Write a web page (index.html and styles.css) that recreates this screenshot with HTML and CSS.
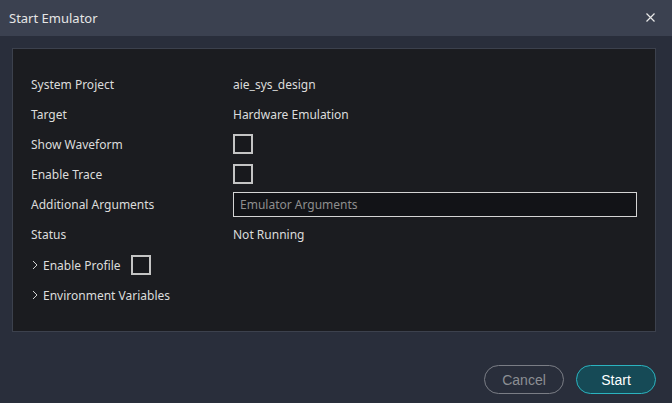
FILE: index.html
```html
<!DOCTYPE html>
<html>
<head>
<meta charset="utf-8">
<link rel="stylesheet" href="styles.css">
</head>
<body>
<div class="dialog">
  <div class="titlebar">
    <span class="title">Start Emulator</span>
    <svg class="close" width="9" height="9" viewBox="0 0 9 9"><path d="M0.5 0.5L8.5 8.5M8.5 0.5L0.5 8.5" stroke="#e8e8e8" stroke-width="1.2" fill="none"/></svg>
  </div>
  <div class="body">
    <div class="panel">
      <div class="grid">
        <div class="label">System Project</div><div class="value">aie_sys_design</div>
        <div class="label">Target</div><div class="value">Hardware Emulation</div>
        <div class="label">Show Waveform</div><div class="value"><span class="check"></span></div>
        <div class="label">Enable Trace</div><div class="value"><span class="check"></span></div>
        <div class="label">Additional Arguments</div><div class="value"><div class="input">Emulator Arguments</div></div>
        <div class="label">Status</div><div class="value">Not Running</div>
      </div>
      <div class="expanders">
        <div class="expander">
          <svg class="chev" width="6" height="10" viewBox="0 0 6 10"><path d="M1 1L5 5L1 9" stroke="#d0d0d0" stroke-width="1" fill="none"/></svg>
          <span>Enable Profile</span><span class="check profile"></span>
        </div>
        <div class="expander">
          <svg class="chev" width="6" height="10" viewBox="0 0 6 10"><path d="M1 1L5 5L1 9" stroke="#d0d0d0" stroke-width="1" fill="none"/></svg>
          <span>Environment Variables</span>
        </div>
      </div>
    </div>
    <div class="actions">
      <button class="btn cancel">Cancel</button>
      <button class="btn start">Start</button>
    </div>
  </div>
</div>
</body>
</html>
```
FILE: styles.css
```css
*, *::before, *::after { box-sizing: border-box; }
html, body { margin: 0; padding: 0; }
body {
  width: 672px; height: 403px; overflow: hidden;
  background: #292e3b;
  font-family: "Noto Sans", "Open Sans", sans-serif;
  font-size: 12px;
  color: #dcdcdc;
}
.dialog { display: flex; flex-direction: column; height: 403px; }
.titlebar {
  flex: 0 0 36px; height: 36px; background: #3b4150;
  display: flex; align-items: center; justify-content: space-between;
  padding: 0 17px 0 9px;
}
.title { font-size: 13px; color: #e6e6e6; }
.close { display: block; margin-top: -1px; }
.body { padding: 12px 16px 0 12px; flex: 1; display: flex; flex-direction: column; }
.panel {
  flex: 0 0 284px; height: 284px; background: #1b1c20; border: 1px solid #3c414d;
  padding: 20px 18px 0 18px;
}
.grid {
  display: grid; grid-template-columns: 202px 1fr;
  grid-auto-rows: 30px; align-items: center;
}
.label, .value { display: flex; align-items: center; height: 30px; }
.check {
  display: inline-block; width: 20px; height: 20px;
  border: 2px solid #c4c4c4; background: #18191d;
}
.input {
  width: 100%; height: 25px; border: 1px solid #d4d4d4; background: #121317;
  color: #8e8e8e; padding-left: 6px; line-height: 23px; font-size: 12px;
}
.expanders { margin-top: 1px; }
.expander { height: 30px; display: flex; align-items: center; }
.chev { margin: 0 5px 0 1px; }
.profile { margin-left: 10px; }
.actions {
  display: flex; justify-content: flex-end; gap: 12px;
  margin-top: 33px;
}
.btn {
  width: 80px; height: 29px; border-radius: 15px;
  font-family: "Liberation Sans", Arial, sans-serif; font-size: 14px;
  padding: 0;
}
.cancel { background: transparent; border: 1px solid #7a7d85; color: #8c8e94; }
.start { background: #164a56; border: 1px solid #2bb3bf; color: #ffffff; }
```
